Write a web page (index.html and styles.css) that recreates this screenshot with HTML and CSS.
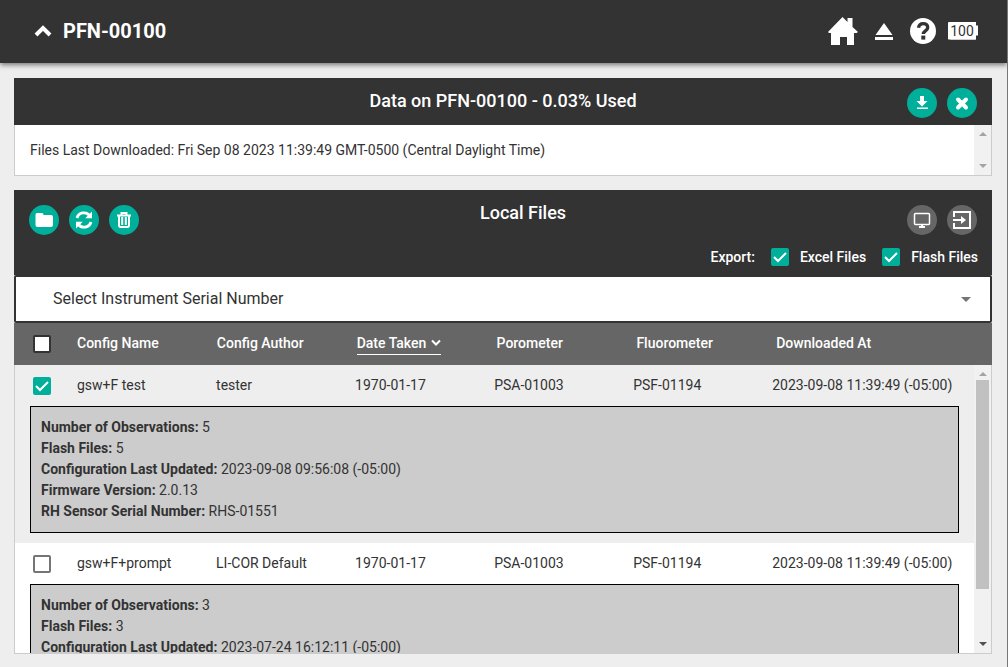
FILE: index.html
```
<!DOCTYPE html>
<html lang="en">
<head>
    <meta charset="UTF-8">
    <meta name="viewport" content="width=device-width, initial-scale=1.0">
    <title>PFN-00100</title>
    <link rel="stylesheet" href="styles.css">
</head>
<body>
    <header class="navbar">
        <button class="nav-button" type="button" aria-label="Collapse">
            <svg width="18" height="12" viewBox="0 0 18 12"><path d="M2 10l7-7 7 7" fill="none" stroke="#fff" stroke-width="4"/></svg>
        </button>
        <h1>PFN-00100</h1>
        <nav class="nav-icons">
            <a href="#home" aria-label="Home">
                <svg width="30" height="28" viewBox="0 0 30 28"><path d="M0 15L14.500 0l5 5V1h5v9l5.500 5-1.500 1H26v12h-7v-8h-7v8H3V16H1z" fill="#fff"/></svg>
            </a>
            <button class="nav-button" type="button" aria-label="Eject">
                <svg width="18" height="18" viewBox="0 0 18 18"><path d="M9 1l8.500 12H.5zM0 15h18v3H0z" fill="#fff"/></svg>
            </button>
            <a href="#help" aria-label="Help">
                <svg width="26" height="26" viewBox="0 0 26 26"><circle cx="13" cy="13" r="13" fill="#fff"/><path d="M8.500 9.800C9 6.500 11 5.600 13.200 5.600c2.600 0 4.500 1.500 4.500 3.800 0 3.500-4.400 3.300-4.400 6.600" fill="none" stroke="#333" stroke-width="3.400"/><rect x="11.300" y="17.600" width="4" height="4" fill="#333"/></svg>
            </a>
            <span class="battery">100</span>
        </nav>
    </header>

    <main class="content">
        <section class="panel">
            <div class="panel-head">
                <h2>Data on PFN-00100 - 0.03% Used</h2>
                <div class="actions actions-right">
                    <button class="round" type="button" aria-label="Download">
                        <svg width="30" height="30" viewBox="0 0 30 30"><path d="M13 8h4v5h3.500L15 18.500 9.500 13H13zM10 19.500h11V21H10z" fill="#fff"/></svg>
                    </button>
                    <button class="round" type="button" aria-label="Close">
                        <svg width="30" height="30" viewBox="0 0 30 30"><path d="M11 11.500l8 8M19 11.500l-8 8" fill="none" stroke="#fff" stroke-width="4"  stroke-linecap="round"/></svg>
                    </button>
                </div>
            </div>
            <div class="scroll-box device-info">
                <p>Files Last Downloaded: Fri Sep 08 2023 11:39:49 GMT-0500 (Central Daylight Time)</p>
                <div class="scrollbar disabled">
                    <span class="arrow-up"></span>
                    <span class="arrow-down"></span>
                </div>
            </div>
        </section>

        <section class="panel local">
            <div class="panel-head local-head">
                <div class="actions">
                    <button class="round" type="button" aria-label="Open folder">
                        <svg width="30" height="30" viewBox="0 0 30 30"><path d="M8 8h5q1.500 0 1.500 2H22q2 0 2 2v8q0 2-2 2H8.500q-2 0-2-2V10q0-2 1.500-2z" fill="#fff"/></svg>
                    </button>
                    <button class="round" type="button" aria-label="Refresh">
                        <svg width="30" height="30" viewBox="0 0 30 30"><g fill="none" stroke="#fff" stroke-width="2.800"><path d="M8 13a7.200 7.200 0 0 1 12.500-2.500M22 17a7.200 7.200 0 0 1-12.500 2.500"/></g><path d="M23 6.500v6.800h-6.800zM7 23.500v-6.800h6.800z" fill="#fff"/></svg>
                    </button>
                    <button class="round" type="button" aria-label="Delete">
                        <svg width="30" height="30" viewBox="0 0 30 30"><path d="M12.500 10V8h5v2M8 10.500h14M10 10.500V20q0 2 1.500 2h7q1.500 0 1.500-2v-9.500M13.200 12v8M16.800 12v8" fill="none" stroke="#fff" stroke-width="2"/></svg>
                    </button>
                </div>
                <h2>Local Files</h2>
                <div class="actions actions-right">
                    <button class="round gray" type="button" aria-label="Show on screen">
                        <svg width="30" height="30" viewBox="0 0 30 30"><path d="M12 21h6v2h-6zM14 19h2v2h-2z" fill="#fff"/><rect x="7.500" y="8.500" width="15" height="11" rx="1" fill="none" stroke="#fff" stroke-width="1.500"/></svg>
                    </button>
                    <button class="round gray" type="button" aria-label="Export">
                        <svg width="30" height="30" viewBox="0 0 30 30"><path d="M7 12V7h16v16H7v-5" fill="none" stroke="#fff" stroke-width="2"/><path d="M6 14h8v-3l5 4-5 4v-3H6z" fill="#fff"/></svg>
                    </button>
                </div>
            </div>
            <div class="export">
                <span class="export-title">Export:</span>
                <label><input type="checkbox" checked> Excel Files</label>
                <label><input type="checkbox" checked> Flash Files</label>
            </div>
            <select class="serial" aria-label="Instrument serial number">
                <option>Select Instrument Serial Number</option>
            </select>

            <table class="files-head">
                <colgroup><col class="check"><col span="5" class="field"><col></colgroup>
                <thead>
                    <tr>
                        <th><input type="checkbox" aria-label="Select all files"></th>
                        <th>Config Name</th>
                        <th>Config Author</th>
                        <th>
                            <button class="sort" type="button">Date Taken
                                <svg width="10" height="7" viewBox="0 0 10 7"><path d="M1 1.500l4 4 4-4" fill="none" stroke="#fff" stroke-width="2"/></svg>
                            </button>
                        </th>
                        <th>Porometer</th>
                        <th>Fluorometer</th>
                        <th>Downloaded At</th>
                    </tr>
                </thead>
            </table>
            <div class="scroll-box files-scroll">
                <div class="files-view">
                    <table class="files">
                        <colgroup><col class="check"><col span="5" class="field"><col></colgroup>
                        <tbody class="shaded">
                            <tr>
                                <td><input type="checkbox" checked aria-label="gsw+F test"></td>
                                <td>gsw+F test</td>
                                <td>tester</td>
                                <td>1970-01-17</td>
                                <td>PSA-01003</td>
                                <td>PSF-01194</td>
                                <td>2023-09-08 11:39:49 (-05:00)</td>
                            </tr>
                            <tr>
                                <td colspan="7" class="details-cell">
                                    <div class="details">
                                        <p><b>Number of Observations:</b> 5</p>
                                        <p><b>Flash Files:</b> 5</p>
                                        <p><b>Configuration Last Updated:</b> 2023-09-08 09:56:08 (-05:00)</p>
                                        <p><b>Firmware Version:</b> 2.0.13</p>
                                        <p><b>RH Sensor Serial Number:</b> RHS-01551</p>
                                    </div>
                                </td>
                            </tr>
                        </tbody>
                        <tbody>
                            <tr>
                                <td><input type="checkbox" aria-label="gsw+F+prompt"></td>
                                <td>gsw+F+prompt</td>
                                <td>LI-COR Default</td>
                                <td>1970-01-17</td>
                                <td>PSA-01003</td>
                                <td>PSF-01194</td>
                                <td>2023-09-08 11:39:49 (-05:00)</td>
                            </tr>
                            <tr>
                                <td colspan="7" class="details-cell">
                                    <div class="details">
                                        <p><b>Number of Observations:</b> 3</p>
                                        <p><b>Flash Files:</b> 3</p>
                                        <p><b>Configuration Last Updated:</b> 2023-07-24 16:12:11 (-05:00)</p>
                                    </div>
                                </td>
                            </tr>
                        </tbody>
                    </table>
                </div>
                <div class="scrollbar">
                    <span class="arrow-up"></span>
                    <span class="track"><span class="thumb"></span></span>
                    <span class="arrow-down"></span>
                </div>
            </div>
        </section>
    </main>
</body>
</html>
```
FILE: styles.css
```
* {
    box-sizing: border-box;
}
body {
    font-family: Roboto, "Liberation Sans", sans-serif;
    font-size: 14px;
    color: #333;
    margin: 0;
    height: 100vh;
    display: flex;
    flex-direction: column;
    background-color: #eee;
    border-right: 1px solid #777;
}
h1, h2, p {
    margin: 0;
}
button {
    font: inherit;
    color: inherit;
    background: none;
    border: none;
    padding: 0;
    cursor: pointer;
}
svg {
    display: block;
}

/* top bar */
.navbar {
    display: flex;
    align-items: center;
    height: 63px;
    flex: none;
    padding: 0 31px 2px 34px;
    background: #333;
    color: #fff;
    box-shadow: 0 2px 5px rgba(0, 0, 0, 0.5);
}
.navbar h1 {
    margin-left: 11px;
    font-size: 20px;
    font-weight: 700;
}
.nav-icons {
    display: flex;
    align-items: center;
    gap: 17px;
    margin-left: auto;
}
.battery {
    width: 28px;
    margin-left: -5px;
    line-height: 18px;
    text-align: center;
    background: #fff;
    color: #333;
    border-radius: 1px;
    box-shadow: 2px 0 0 #fff;
    clip-path: polygon(0 0, 28px 0, 28px 4px, 30px 4px, 30px 14px, 28px 14px, 28px 18px, 0 18px);
}

/* panels */
.content {
    flex: 1;
    min-height: 0;
    display: flex;
    flex-direction: column;
    gap: 14px;
    padding: 15px 15px 13px 14px;
}
.panel-head {
    display: grid;
    grid-template-columns: 1fr auto 1fr;
    align-items: start;
    height: 47px;
    padding: 0 15px;
    background: #333;
    color: #fff;
}
.panel-head h2 {
    grid-column: 2;
    margin-top: 12px;
    font-size: 18px;
    font-weight: 500;
    line-height: 22px;
}
.actions {
    display: flex;
    gap: 10px;
    margin-top: 10px;
}
.actions-right {
    grid-column: 3;
    justify-content: flex-end;
}
.local-head {
    grid-template-columns: auto 1fr auto;
}
.local-head h2 {
    text-align: center;
}
.local-head .actions {
    margin-top: 15px;
}
.round {
    width: 30px;
    height: 30px;
    border-radius: 50%;
    background: #00af9a;
}
.round.gray {
    background: #666;
}
.scroll-box {
    display: flex;
    border: 1px solid #ccc;
    border-top: none;
    background: #fff;
}
.device-info {
    height: 51px;
}
.device-info p {
    flex: 1;
    padding-left: 15px;
    line-height: 50px;
}
.local {
    flex: 1;
    min-height: 0;
    display: flex;
    flex-direction: column;
}

/* export options */
.export {
    display: flex;
    justify-content: flex-end;
    align-items: center;
    gap: 16px;
    height: 38px;
    padding: 2px 14px 0;
    background: #333;
    color: #fff;
    font-weight: 500;
}
.export label {
    display: flex;
    align-items: center;
    gap: 11px;
}
input[type="checkbox"] {
    appearance: none;
    display: block;
    width: 18px;
    height: 18px;
    margin: 0;
    border: 2px solid #757575;
    border-radius: 2px;
    background: #fff;
}
input[type="checkbox"]:checked {
    border: none;
    background: #00af9a url("data:image/svg+xml,%3Csvg xmlns='http://www.w3.org/2000/svg' width='18' height='18'%3E%3Cpath d='M3 9l4 4 8-8' fill='none' stroke='white' stroke-width='2'/%3E%3C/svg%3E");
}
.serial {
    appearance: none;
    width: 100%;
    height: 48px;
    flex: none;
    padding: 0 37px 2px;
    border: 2px solid #333;
    border-radius: 2px;
    background: #fff url("data:image/svg+xml,%3Csvg xmlns='http://www.w3.org/2000/svg' width='10' height='5'%3E%3Cpath d='M0 0h10L5 5z' fill='%23757575'/%3E%3C/svg%3E") no-repeat right 19px center;
    font-family: inherit;
    font-size: 16px;
    color: #333;
}

/* file list */
table {
    width: 100%;
    table-layout: fixed;
    border-collapse: collapse;
}
th, td {
    padding: 0 0 2px;
    text-align: left;
    white-space: nowrap;
}
th input[type="checkbox"], td input[type="checkbox"] {
    margin: 2px 0 0 18px;
}
.files-head {
    background: #666;
    color: #fff;
}
.files-head th {
    height: 42px;
    font-weight: 500;
}
.files-head th input[type="checkbox"] {
    margin-left: 19px;
    border-color: #333;
}
.files-head .check {
    width: 63px;
}
.files-head .field {
    width: 14.3%;
}
.sort {
    display: inline-flex;
    align-items: center;
    gap: 5px;
    height: 24px;
    border-bottom: 1px solid #fff;
}
.files-scroll {
    flex: 1;
    min-height: 0;
}
.files-view {
    flex: 1;
    overflow: hidden;
}
.files td {
    height: 41px;
}
.files .check {
    width: 62px;
}
.files .field {
    width: 14.5%;
}
.files .shaded {
    background: #eee;
}
.files .details-cell {
    padding: 0 15px 10px;
}
.details {
    padding: 10px;
    border: 1px solid #000;
    background: #ccc;
    line-height: 21px;
}
.details b {
    font-weight: 700;
}

/* scrollbars */
.scrollbar {
    display: flex;
    flex-direction: column;
    justify-content: space-between;
    align-items: center;
    width: 17px;
    padding: 7px 0;
    background: #f1f1f1;
}
.arrow-up, .arrow-down {
    border: 4px solid transparent;
}
.arrow-up {
    border-top: none;
    border-bottom-color: #a3a3a3;
}
.arrow-down {
    border-bottom: none;
    border-top-color: #505050;
}
.disabled .arrow-down {
    border-top-color: #a3a3a3;
}
.track {
    flex: 1;
    width: 13px;
    padding: 4px 0;
}
.thumb {
    display: block;
    height: 81%;
    background: #c1c1c1;
}
```
